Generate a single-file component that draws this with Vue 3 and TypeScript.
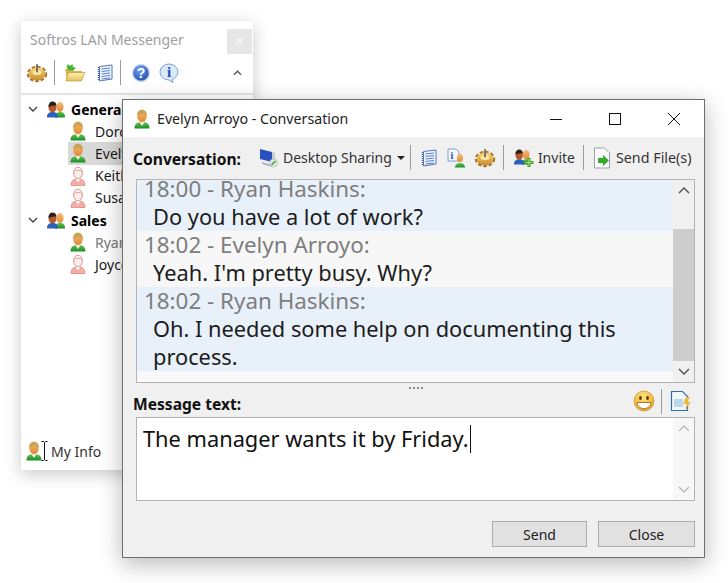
<script setup lang="ts">
interface Row { label: string; kind: 'group' | 'on' | 'off'; selected?: boolean; dim?: boolean }
const rows: Row[] = [
  { label: 'General', kind: 'group' },
  { label: 'Dorothy', kind: 'on' },
  { label: 'Evelyn', kind: 'on', selected: true },
  { label: 'Keith', kind: 'off' },
  { label: 'Susan', kind: 'off' },
  { label: 'Sales', kind: 'group' },
  { label: 'Ryan', kind: 'on', dim: true },
  { label: 'Joyce', kind: 'off' },
]
const messages = [
  { head: '18:00 - Ryan Haskins:', body: 'Do you have a lot of work?', tone: 'blue' },
  { head: '18:02 - Evelyn Arroyo:', body: "Yeah. I'm pretty busy. Why?", tone: 'pale' },
  { head: '18:02 - Ryan Haskins:', body: 'Oh. I needed some help on documenting this process.', tone: 'blue' },
]
</script>

<template>
  <div class="desk">
    <svg width="0" height="0" class="defs">
      <defs>
        <linearGradient id="skin" x1="0" y1="0" x2="0" y2="1"><stop offset="0" stop-color="#f6bb78" /><stop offset="1" stop-color="#e08a34" /></linearGradient>
        <linearGradient id="shirt" x1="0" y1="0" x2="0" y2="1"><stop offset="0" stop-color="#62c650" /><stop offset="1" stop-color="#1f8a2a" /></linearGradient>
        <linearGradient id="gear" x1="0" y1="0" x2="0" y2="1"><stop offset="0" stop-color="#f6d878" /><stop offset="1" stop-color="#c98a30" /></linearGradient>
        <linearGradient id="folder" x1="0" y1="0" x2="0" y2="1"><stop offset="0" stop-color="#fcefb4" /><stop offset="1" stop-color="#e6c05a" /></linearGradient>
        <radialGradient id="ball" cx=".4" cy=".3" r=".8"><stop offset="0" stop-color="#6f9fea" /><stop offset="1" stop-color="#1c49aa" /></radialGradient>
        <radialGradient id="smile" cx=".45" cy=".3" r=".8"><stop offset="0" stop-color="#ffe680" /><stop offset="1" stop-color="#e89a18" /></radialGradient>
        <symbol id="u-on" viewBox="0 0 16 20">
          <path d="M.5 19.500c0-4 1.500-5.500 5-6.500l2.500 3 2.500-3c3.500 1 5 2.500 5 6.500z" fill="url(#shirt)" />
          <path d="M5.500 13L8 17l2.500-4z" fill="#eef7e6" />
          <ellipse cx="8" cy="7" rx="4.800" ry="6.200" fill="url(#skin)" />
          <path d="M3.200 6.500C3 2.500 5.500.7 8 .7s5 1.800 4.800 5.800C10.500 4.500 5.500 4.500 3.200 6.500z" fill="#c7a552" />
        </symbol>
        <symbol id="u-off" viewBox="0 0 16 20">
          <path d="M1 19.500c0-4 1.500-5.500 4.500-6.500L8 16l2.500-3c3 1 4.500 2.500 4.500 6.500z" fill="#f2aea6" stroke="#dd8a82" stroke-width=".8" />
          <path d="M5.800 13.500L8 16.500l2.200-3z" fill="#fff" />
          <ellipse cx="8" cy="7" rx="4.400" ry="5.800" fill="#fbeeea" stroke="#dd8a82" stroke-width=".9" />
          <path d="M4 5.500c2-1.500 6-1.500 8 0" fill="none" stroke="#e8aaa3" />
        </symbol>
        <symbol id="group" viewBox="0 0 20 18">
          <path d="M9 17.500c0-4 1.500-5.500 5-5.500s5 1.500 5 5.500z" fill="url(#shirt)" />
          <ellipse cx="14" cy="7" rx="3.500" ry="5" fill="url(#skin)" />
          <path d="M1 17.500c0-4 2-5.500 5.500-5.500s5.500 1.500 5.500 5.500z" fill="#2b5fc0" />
          <ellipse cx="6.500" cy="7.500" rx="4" ry="5" fill="#b5592a" />
          <path d="M2.500 7c0-4 2-5.500 4-5.500s4 1.500 4 4c-2 0-5 0-8 1.500z" fill="#2a2018" />
        </symbol>
        <symbol id="gearI" viewBox="0 0 22 20">
          <ellipse cx="11" cy="11" rx="9" ry="7" fill="none" stroke="#a86e22" stroke-width="2.400" stroke-dasharray="3.400 2" />
          <ellipse cx="11" cy="11" rx="8.500" ry="6.500" fill="url(#gear)" />
          <ellipse cx="11" cy="9.500" rx="4.500" ry="2.500" fill="#fbe7a4" />
          <rect x="10" y="1" width="2" height="8.500" rx=".8" fill="#77736a" />
        </symbol>
        <symbol id="notes" viewBox="0 0 16 18">
          <path d="M2.500 2.500L15 1v14L2.500 17z" fill="#eef3fb" stroke="#5a76b8" />
          <path d="M4.500 5L13 4M4.500 7.500L13 6.500M4.500 10L13 9M4.500 12.500L13 11.500M4.500 15L13 14" stroke="#5a84cc" stroke-width="1.100" />
          <path d="M1.500 3v13" stroke="#3a5aa0" stroke-width="1.400" stroke-dasharray="1 1" />
        </symbol>
      </defs>
    </svg>

    <section class="win back">
      <header class="back-title">
        <span>Softros LAN Messenger</span>
        <span class="ghost-close">×</span>
      </header>
      <div class="back-tools">
        <svg class="i22" viewBox="0 0 22 20"><use href="#gearI" /></svg>
        <i class="sep" />
        <svg class="i22" viewBox="0 0 22 20">
          <path d="M1 6h7l2 2h8v9H3z" fill="#dcb648" />
          <path d="M4.500 9.500H21l-3.500 8.500H2z" fill="url(#folder)" stroke="#b8922e" stroke-width=".6" />
          <path d="M4 1l2 2 2.500-2 .5 3 3 1-3 2.500H4.500L2.500 4z" fill="#46b53a" />
        </svg>
        <svg class="i18 notes" viewBox="0 0 16 18"><use href="#notes" /></svg>
        <i class="sep s2" />
        <svg class="i20" viewBox="0 0 20 20">
          <circle cx="10" cy="10" r="8.500" fill="url(#ball)" stroke="#cfdcf2" stroke-width="1.500" />
          <text x="10" y="15" text-anchor="middle" class="q">?</text>
        </svg>
        <svg class="i20 info" viewBox="0 0 20 20">
          <path d="M10 1a9 8 0 0 1 3 15.500l1 3-4-2.500A9 8 0 0 1 10 1z" fill="#dbe8f8" stroke="#7d9fd4" />
          <text x="10" y="14" text-anchor="middle" class="iq">i</text>
        </svg>
        <svg class="chev-up" viewBox="0 0 10 6"><path d="M1 5l4-4 4 4" fill="none" stroke="#555" stroke-width="1.500" /></svg>
      </div>
      <ul class="tree">
        <li v-for="r in rows" :key="r.label" class="row" :class="r.kind === 'group' ? 'group' : 'leaf'">
          <template v-if="r.kind === 'group'">
            <svg class="chev-down" viewBox="0 0 10 6"><path d="M1 1l4 4 4-4" fill="none" stroke="#444" stroke-width="1.400" /></svg>
            <svg class="gicon" viewBox="0 0 20 18"><use href="#group" /></svg>
            <b>{{ r.label }}</b>
          </template>
          <div v-else class="leaf-in" :class="{ sel: r.selected, dim: r.dim }">
            <svg class="uicon" viewBox="0 0 16 20"><use href="#u-on" v-if="r.kind === 'on'" /><use href="#u-off" v-else /></svg>
            <span>{{ r.label }}</span>
          </div>
        </li>
      </ul>
      <footer class="myinfo">
        <svg class="uicon" viewBox="0 0 16 20"><use href="#u-on" /></svg>
        <svg class="ibeam" viewBox="0 0 7 20"><path d="M.500 .500h2l1 1 1-1h2M3.500 1.500v17M.500 19.500h2l1-1 1 1h2" fill="none" stroke="#111" /></svg>
        <span>My Info</span>
      </footer>
    </section>

    <section class="win front">
      <header class="front-title">
        <svg class="uicon" viewBox="0 0 16 20"><use href="#u-on" /></svg>
        <span class="ft-text">Evelyn Arroyo - Conversation</span>
        <div class="caps">
          <svg viewBox="0 0 14 14"><path d="M1 7.500h12" stroke="#111" /></svg>
          <svg viewBox="0 0 14 14"><rect x="1.500" y="1.500" width="11" height="11" fill="none" stroke="#111" /></svg>
          <svg viewBox="0 0 14 14"><path d="M1 1l12 12M13 1L1 13" stroke="#111" /></svg>
        </div>
      </header>

      <div class="body">
        <div class="toolbar">
          <b class="lbl">Conversation:</b>
          <svg class="tool-desk" viewBox="0 0 20 20">
            <path d="M1 1l12 3v10L1 11z" fill="#2a4fc0" />
            <path d="M13 4l3 1v10l-3-1z" fill="#c8ccd4" />
            <path d="M3 14l10 3v2L3 16z" fill="#aeb2ba" />
            <circle cx="14.500" cy="15" r="4" fill="#dfe6dc" stroke="#9aa" stroke-width=".5" />
            <path d="M12.500 17l4-4" stroke="#2f9a30" stroke-width="1.300" />
          </svg>
          <span class="t-text ds">Desktop Sharing</span>
          <i class="caret" />
          <i class="sep t1" />
          <svg class="i18 tn" viewBox="0 0 16 18"><use href="#notes" /></svg>
          <svg class="i20 tu" viewBox="0 0 20 20">
            <path d="M2 1h8l3 3v9H2z" fill="#f2f6fc" stroke="#7d9fd4" />
            <text x="6" y="11" text-anchor="middle" class="iq2">i</text>
            <ellipse cx="14" cy="10" rx="3" ry="4" fill="url(#skin)" />
            <path d="M9 19.500c0-3 2-4.500 5-4.500s5 1.500 5 4.500z" fill="url(#shirt)" />
          </svg>
          <svg class="i22 tg" viewBox="0 0 22 20"><use href="#gearI" /></svg>
          <i class="sep t2" />
          <svg class="i22 ti" viewBox="0 0 22 20">
            <use href="#group" width="19" height="17" />
            <path d="M16 10v9M11.500 14.500h9" stroke="#3f9a2c" stroke-width="3" />
            <path d="M16 11v7M12.500 14.500h7" stroke="#a8e070" stroke-width="1.200" />
          </svg>
          <span class="t-text">Invite</span>
          <i class="sep t3" />
          <svg class="i22 tf" viewBox="0 0 18 22">
            <path d="M1.500 1h10l5 5v15h-15z" fill="#fafafa" stroke="#9aa0a8" />
            <path d="M5 11h5V8l6 5.500-6 5.500v-3H5z" fill="#3aa82a" />
          </svg>
          <span class="t-text sf">Send File(s)</span>
        </div>

        <div class="chat">
          <div class="msgs">
            <div class="clip">
              <div v-for="(m, i) in messages" :key="i" class="msg" :class="m.tone">
                <div class="head">{{ m.head }}</div>
                <div class="text">{{ m.body }}</div>
              </div>
            </div>
          </div>
          <div class="sbar">
            <svg class="sb-btn" viewBox="0 0 12 7"><path d="M1 6l5-5 5 5" fill="none" stroke="#555" stroke-width="1.500" /></svg>
            <div class="track"><div class="thumb" /></div>
            <svg class="sb-btn" viewBox="0 0 12 7"><path d="M1 1l5 5 5-5" fill="none" stroke="#555" stroke-width="1.500" /></svg>
          </div>
        </div>

        <div class="grip"><i /></div>

        <div class="msg-head">
          <b class="lbl">Message text:</b>
          <div class="mh-icons">
            <svg class="i22 smile" viewBox="0 0 22 22">
              <circle cx="11" cy="11" r="10" fill="url(#smile)" stroke="#c98a1c" stroke-width=".6" />
              <ellipse cx="7.500" cy="8" rx="1.400" ry="2" fill="#5a3a10" />
              <ellipse cx="14.500" cy="8" rx="1.400" ry="2" fill="#5a3a10" />
              <path d="M4 12.500h14c-.5 4-3.500 6-7 6s-6.500-2-7-6z" fill="#fff" stroke="#8a5a14" stroke-width=".8" />
            </svg>
            <i class="sep t4" />
            <svg class="i22 smile" viewBox="0 0 22 22">
              <path d="M1.500 1.500h11l5 5v14h-16z" fill="#f2f7fc" stroke="#2f6fa8" stroke-width="1.200" />
              <rect x="4" y="9" width="9" height="8" fill="#bcd8ea" />
              <path d="M16 7l4 0-2.500 5H21l-6 8 1.500-6H13z" fill="#f0b840" />
            </svg>
          </div>
        </div>

        <div class="input">
          <div class="in-text"><span>The manager wants it by Friday.</span><i class="cursor" /></div>
          <div class="sbar off">
            <svg class="sb-btn" viewBox="0 0 12 7"><path d="M1 6l5-5 5 5" fill="none" stroke="#bbb" stroke-width="1.500" /></svg>
            <div class="track" />
            <svg class="sb-btn" viewBox="0 0 12 7"><path d="M1 1l5 5 5-5" fill="none" stroke="#bbb" stroke-width="1.500" /></svg>
          </div>
        </div>

        <div class="actions">
          <button class="btn send">Send</button>
          <button class="btn close">Close</button>
        </div>
      </div>
    </section>
  </div>
</template>

<style>
html, body { margin: 0; background: #fff; }
</style>

<style scoped>
.desk {
  position: relative;
  width: 728px;
  height: 583px;
  overflow: hidden;
  font-family: "Noto Sans", "Open Sans", sans-serif;
  color: #1a1a1a;
  background: #fff;
}
.defs { position: absolute; }
svg { display: block; flex: none; overflow: visible; }
.q { font: 700 14px "Liberation Sans", sans-serif; fill: #fff; }
.iq { font: 700 15px "Liberation Serif", serif; fill: #1f4fb0; }
.iq2 { font: 700 10px "Liberation Serif", serif; fill: #1f4fb0; }
.win { position: absolute; box-sizing: border-box; display: flex; flex-direction: column; }

/* back window */
.back {
  left: 21px; top: 21px; width: 232px; height: 449px;
  background: #fff;
  box-shadow: 0 4px 16px rgba(0,0,0,.22);
}
.back-title { display: flex; justify-content: space-between; padding: 8px 1px 0 9px; height: 31px; box-sizing: border-box; font-size: 14px; color: #9e9e9e; line-height: 22px; }
.ghost-close { width: 25px; height: 25px; background: #e6e6e6; color: #fafafa; text-align: center; line-height: 23px; font-size: 15px; }
.back-tools { display: flex; align-items: center; height: 41px; margin-bottom: 1px; border-bottom: 2px solid #e3e3e3; padding: 0 9px 0 5px; box-sizing: content-box; }
.i22 { width: 22px; height: 20px; }
.i20 { width: 20px; height: 20px; }
.i18 { width: 16px; height: 18px; }
.sep { display: block; width: 1px; height: 25px; background: #9c9c9c; flex: none; }
.back-tools .sep { margin: 0 9px 0 6px; }
.back-tools .notes { margin-left: 11px; }
.back-tools .s2 { margin: 0 10px 0 7px; }
.back-tools .info { margin-left: 8px; }
.chev-up { width: 9px; height: 6px; margin-left: auto; margin-right: 2px; }
.tree { list-style: none; margin: 0; padding: 2px 0 0 0; flex: 1; font-size: 14px; }
.row { height: 22.200px; display: flex; align-items: center; }
.group { padding-left: 7px; }
.group b { margin-left: 5px; font-weight: 700; color: #000; font-size: 14px; }
.chev-down { width: 10px; height: 6px; margin-right: 8px; }
.gicon { width: 20px; height: 18px; }
.leaf-in { display: flex; align-items: center; margin-left: 47px; flex: 1; height: 100%; gap: 9px; padding-left: 2px; }
.leaf-in.sel { background: #d9d9d9; }
.leaf-in.dim span { color: #777; }
.uicon { width: 16px; height: 20px; }
.myinfo { display: flex; align-items: center; height: 20px; padding: 0 0 9px 5px; font-size: 14px; color: #333; }
.ibeam { width: 7px; height: 20px; margin: 0 3px 0 -1px; }

/* front window */
.front {
  left: 122px; top: 99px; width: 583px; height: 459px;
  border: 1px solid #6e6e6e;
  background: #f0f0f0;
  box-shadow: 0 6px 22px rgba(0,0,0,.28);
}
.front-title { display: flex; align-items: center; height: 37px; flex: none; background: #fff; padding-left: 11px; font-size: 14.2px; }
.ft-text { margin-left: 7px; color: #222; }
.caps { display: flex; margin-left: auto; margin-right: 23px; gap: 45px; }
.caps svg { width: 14px; height: 14px; }
.body { flex: 1; display: flex; flex-direction: column; padding: 0 9px 0 10px; min-height: 0; }
.toolbar { display: flex; align-items: center; height: 41px; margin-bottom: 1px; flex: none; font-size: 14px; }
.lbl { font-weight: 700; color: #111; font-size: 15.600px; }
.toolbar .lbl { position: relative; top: 1px; }
.tool-desk { width: 20px; height: 20px; margin-left: 18px; }
.t-text { color: #333; }
.ds { margin-left: 4px; }
.sf { font-size: 14.300px; }
.caret { width: 0; height: 0; border: 4px solid transparent; border-top-color: #222; border-bottom: 0; margin-left: 5px; }
.t1 { margin-left: 5px; }
.tn { margin-left: 10px; }
.tu { margin-left: 9px; }
.tg { margin-left: 8px; }
.t2 { margin-left: 7px; }
.ti { margin-left: 9px; margin-right: 3px; }
.t3 { margin-left: 8px; }
.tf { margin-left: 9px; margin-right: 5px; height: 22px; width: 18px; }

.chat { display: flex; height: 204px; margin-left: 3px; flex: none; box-sizing: border-box; border: 1px solid #b4b4b4; background: #fff; }
.msgs { flex: 1; min-width: 0; overflow: hidden; display: flex; flex-direction: column; padding-top: 3px; background: #fff; }
.clip { background: #f9f9f9; padding-bottom: 10px; flex: 1; }
.msg { padding: 0 30px 0 7px; font-size: 21.800px; line-height: 28px; }
.msg.blue { background: #e8f0f9; }
.msg.pale { background: #f7f7f7; }
.head { color: #7e7e7e; font-size: 22.400px; }
.text { padding-left: 9px; color: #1c1c1c; }
.clip .msg:first-child .head { margin-top: -8px; }
.sbar { width: 21px; flex: none; display: flex; flex-direction: column; align-items: center; background: #f0f0f0; }
.sb-btn { width: 12px; height: 7px; margin: 7px 0; }
.track { flex: 1; width: 100%; display: flex; flex-direction: column; justify-content: flex-end; }
.thumb { height: 132px; background: #cdcdcd; }
.grip { height: 12px; flex: none; display: flex; justify-content: center; padding-top: 4px; box-sizing: border-box; padding-left: 4px; }
.grip i { display: block; width: 15px; height: 2px; background: repeating-linear-gradient(90deg, #8a8a8a 0 2px, transparent 2px 4px); }
.msg-head { height: 22px; flex: none; display: flex; align-items: flex-end; justify-content: space-between; box-sizing: border-box; }
.msg-head .lbl { line-height: 22px; position: relative; top: -2px; }
.mh-icons { display: flex; align-items: center; gap: 0; margin-right: 3px; align-self: center; position: relative; top: -5px; }
.smile { height: 22px; }
.t4 { margin: 0 8px 0 6px; }
.input { display: flex; height: 84px; margin-left: 3px; flex: none; box-sizing: border-box; border: 1px solid #b4b4b4; background: #fff; }
.in-text { flex: 1; padding: 6px 6px; font-size: 21.800px; line-height: 30px; color: #111; display: flex; align-items: flex-start; height: 30px; }
.cursor { display: block; width: 1px; height: 28px; background: #111; margin: 1px 0 0 1px; }
.input .sbar { background: #f7f7f7; }
.actions { display: flex; justify-content: flex-end; gap: 11px; margin-top: 20px; flex: none; }
.btn { height: 26px; box-sizing: border-box; border: 1px solid #adadad; background: #e1e1e1; font-family: inherit; font-size: 14px; color: #222; padding: 0; }
.send { width: 95px; }
.close { width: 97px; }
</style>
